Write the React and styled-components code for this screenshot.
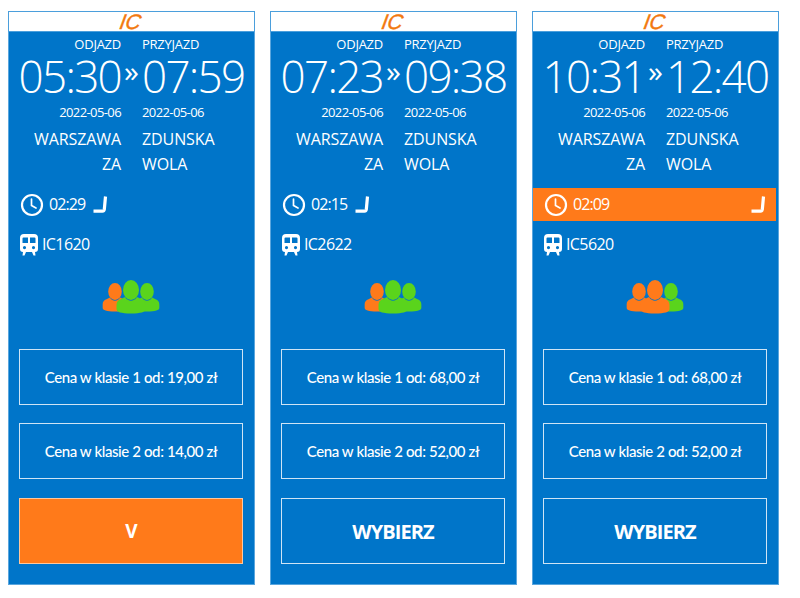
import React from 'react';
import styled, { createGlobalStyle } from 'styled-components';

const GlobalStyle = createGlobalStyle`
  html, body {
    margin: 0;
    padding: 0;
    background: #ffffff;
  }
  * {
    box-sizing: border-box;
  }
`;

const Page = styled.div`
  display: flex;
  align-items: flex-start;
  gap: 15px;
  width: 800px;
  height: 598px;
  padding: 11px 0 0 8px;
  font-family: 'Open Sans', 'Noto Sans', sans-serif;
  color: #ffffff;
`;

const Card = styled.div`
  display: flex;
  flex-direction: column;
  width: 247px;
  height: 574px;
  background: #0075c9;
  border: 1px solid #5aa6de;
  border-top: none;
`;

const Brand = styled.div`
  display: flex;
  justify-content: center;
  align-items: center;
  height: 21px;
  background: #ffffff;
  border: 1px solid #4b9fdc;
  margin: 0 -1px;
  overflow: hidden;
`;

const BrandText = styled.span`
  display: inline-block;
  font-family: 'Liberation Sans', sans-serif;
  font-size: 21px;
  line-height: 20px;
  font-style: italic;
  color: #f2790f;
  letter-spacing: 0;
  margin-right: 3px;
  transform: skewX(-10deg);
  -webkit-text-stroke: 0.4px #f2790f;
`;

const Grid = styled.div`
  display: grid;
  grid-template-columns: 112px 21px 1fr;
  margin-top: 4px;
`;

const Label = styled.div`
  grid-column: ${p => (p.$right ? 3 : 1)};
  text-align: ${p => (p.$right ? 'left' : 'right')};
  font-size: 13px;
  line-height: 16px;
  letter-spacing: -0.25px;
  height: 16px;
`;

const Time = styled.div`
  grid-column: ${p => (p.$right ? 3 : 1)};
  justify-self: ${p => (p.$right ? 'start' : 'end')};
  font-size: 44px;
  font-weight: 300;
  line-height: 48px;
  height: 48px;
  letter-spacing: -1.7px;
  white-space: nowrap;
`;

const Arrow = styled.div`
  grid-column: 2;
  font-size: 30px;
  line-height: 38px;
  text-align: center;
  height: 48px;
`;

const DateText = styled.div`
  grid-column: ${p => (p.$right ? 3 : 1)};
  text-align: ${p => (p.$right ? 'left' : 'right')};
  font-size: 13px;
  line-height: 18px;
  height: 18px;
  letter-spacing: -0.6px;
  margin-top: 3px;
`;

const City = styled.div`
  grid-column: ${p => (p.$right ? 3 : 1)};
  text-align: ${p => (p.$right ? 'left' : 'right')};
  font-size: 16px;
  line-height: 25px;
  letter-spacing: -0.1px;
  margin-top: 6px;
  padding-left: ${p => (p.$right ? '0' : '20px')};
  width: ${p => (p.$right ? '90px' : 'auto')};
`;

const Duration = styled.div`
  display: flex;
  align-items: center;
  height: 33px;
  margin-top: 11px;
  margin-right: 2px;
  padding: 0 11px;
  background: ${p => (p.$active ? '#ff7a1a' : 'transparent')};
  font-size: 16px;
  letter-spacing: -0.9px;
`;

const DurationText = styled.span`
  margin: -2px 0 0 5px;
`;

const CornerSlot = styled.div`
  display: flex;
  margin: 0 ${p => (p.$active ? '-1px' : '0')} 0 ${p => (p.$active ? 'auto' : '8px')};
`;

const TrainRow = styled.div`
  display: flex;
  align-items: center;
  gap: 4px;
  height: 24px;
  margin-top: 12px;
  padding-left: 11px;
  font-size: 16px;
  letter-spacing: -0.6px;
`;

const TrainName = styled.span`
  margin-top: -3px;
`;

const People = styled.div`
  display: flex;
  justify-content: center;
  margin-top: 23px;
  padding-right: 2px;
  height: 36px;
`;

const Actions = styled.div`
  display: flex;
  flex-direction: column;
  gap: 18px;
  margin-top: 33px;
  padding: 0 11px 0 10px;
`;

const PriceBox = styled.div`
  display: flex;
  align-items: center;
  justify-content: center;
  height: 56px;
  border: 1px solid #cfe4f5;
  font-family: 'Lato', 'Open Sans', sans-serif;
  font-size: 15px;
  font-weight: 500;
  letter-spacing: -0.4px;
`;

const SelectButton = styled.div`
  display: flex;
  align-items: center;
  justify-content: center;
  height: 66px;
  margin-top: 1px;
  border: 1px solid ${p => (p.$selected ? '#ffc79c' : '#cfe4f5')};
  background: ${p => (p.$selected ? '#ff7a1a' : 'transparent')};
  font-size: ${p => (p.$selected ? '19px' : '20px')};
  font-weight: 700;
  letter-spacing: -0.9px;
`;

const ClockIcon = () => (
  <svg width="24" height="24" viewBox="0 0 24 24" fill="none" stroke="#fff" strokeWidth="2.2" strokeLinecap="round">
    <circle cx="12" cy="12" r="10" />
    <path d="M11.5 6v6.5l4.5 2.5" strokeWidth="1.7" />
  </svg>
);

const CornerIcon = () => (
  <svg width="15" height="18" viewBox="0 0 15 18" fill="none">
    <path d="M12.5 0.5 L11.3 13.5 Q11 15.2 9.5 15.2 L0.5 15.2" stroke="#fff" strokeWidth="3.2" strokeLinejoin="round" />
  </svg>
);

const TrainIcon = () => (
  <svg width="18" height="22" viewBox="0 0 18 22">
    <path
      fill="#fff"
      fillRule="evenodd"
      d="M4 0h10a4 4 0 0 1 4 4v11a3 3 0 0 1-3 3H3a3 3 0 0 1-3-3V4a4 4 0 0 1 4-4zM2.5 4.5v4.5h5.5V3.5H3.5a1 1 0 0 0-1 1zM10 3.5V9h5.5V4.5a1 1 0 0 0-1-1zM4.5 12a1.6 1.6 0 1 0 0 3.2 1.6 1.6 0 0 0 0-3.2zM13.5 12a1.6 1.6 0 1 0 0 3.2 1.6 1.6 0 0 0 0-3.2z"
    />
    <path fill="#fff" d="M3 18h3l-1.5 3.5H2.5zM12 18h3l.5 3.5h-2z" />
  </svg>
);

const Person = ({ x, y, scale, color }) => (
  <g transform={`translate(${x} ${y}) scale(${scale})`} fill={color}>
    <ellipse cx="0" cy="10" rx="8" ry="10" />
    <path d="M-6 17 C-3 22 3 22 6 17 L10 19 C13 20 14.5 22 14.5 25 L14.5 29 C14.5 32 10 33.5 0 33.5 C-10 33.5 -14.5 32 -14.5 29 L-14.5 25 C-14.5 22 -13 20 -10 19 Z" />
  </g>
);

const PeopleIcon = ({ colors }) => (
  <svg width="58" height="36" viewBox="0 0 58 36">
    <Person x={13} y={3} scale={0.85} color={colors[0]} />
    <Person x={45} y={3} scale={0.85} color={colors[2]} />
    <Person x={29} y={0} scale={1} color={colors[1]} />
  </svg>
);

const ORANGE = '#ff7a1a';
const GREEN = '#5ad41c';

const trains = [
  {
    dep: '05:30',
    arr: '07:59',
    length: '02:29',
    name: 'IC1620',
    seats: [ORANGE, GREEN, GREEN],
    first: '19,00',
    second: '14,00',
    selected: true
  },
  {
    dep: '07:23',
    arr: '09:38',
    length: '02:15',
    name: 'IC2622',
    seats: [ORANGE, GREEN, GREEN],
    first: '68,00',
    second: '52,00'
  },
  {
    dep: '10:31',
    arr: '12:40',
    length: '02:09',
    name: 'IC5620',
    seats: [ORANGE, ORANGE, GREEN],
    first: '68,00',
    second: '52,00',
    fastest: true
  }
];

const TrainCard = ({ train }) => (
  <Card>
    <Brand>
      <BrandText>IC</BrandText>
    </Brand>
    <Grid>
      <Label>ODJAZD</Label>
      <Label $right>PRZYJAZD</Label>
      <Time>{train.dep}</Time>
      <Arrow>»</Arrow>
      <Time $right>{train.arr}</Time>
      <DateText>2022-05-06</DateText>
      <DateText $right>2022-05-06</DateText>
      <City>WARSZAWA ZA</City>
      <City $right>ZDUNSKA WOLA</City>
    </Grid>
    <Duration $active={train.fastest}>
      <ClockIcon />
      <DurationText>{train.length}</DurationText>
      <CornerSlot $active={train.fastest}>
        <CornerIcon />
      </CornerSlot>
    </Duration>
    <TrainRow>
      <TrainIcon />
      <TrainName>{train.name}</TrainName>
    </TrainRow>
    <People>
      <PeopleIcon colors={train.seats} />
    </People>
    <Actions>
      <PriceBox>Cena w klasie 1 od: {train.first} zł</PriceBox>
      <PriceBox>Cena w klasie 2 od: {train.second} zł</PriceBox>
      <SelectButton $selected={train.selected}>{train.selected ? 'V' : 'WYBIERZ'}</SelectButton>
    </Actions>
  </Card>
);

export default function App() {
  return (
    <>
      <GlobalStyle />
      <Page>
        {trains.map(train => (
          <TrainCard key={train.name} train={train} />
        ))}
      </Page>
    </>
  );
}
